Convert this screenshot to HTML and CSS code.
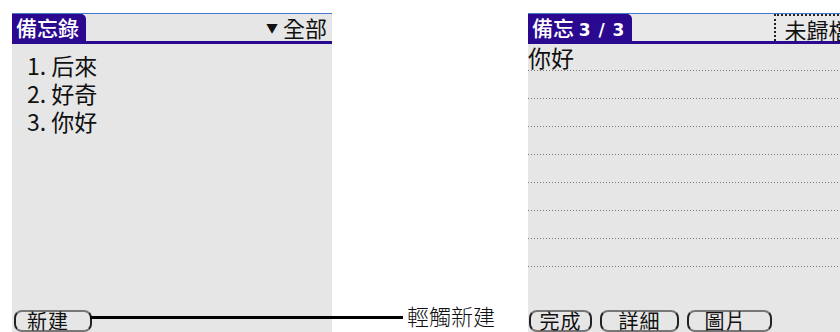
FILE: index.html
```html
<!DOCTYPE html>
<html lang="zh-Hant">
<head>
    <meta charset="UTF-8">
    <meta name="viewport" content="width=device-width, initial-scale=1.0">
    <link rel="stylesheet" href="styles.css">
    <title>備忘錄</title>
</head>
<body>
    <div class="pagina">
        <!-- tela da lista -->
        <section class="tela">
            <div class="topo">
                <span class="aba">備忘錄</span>
                <span class="categoria"><span class="seta">▼</span>全部</span>
            </div>
            <ol class="lista">
                <li>1. 后來</li>
                <li>2. 好奇</li>
                <li>3. 你好</li>
            </ol>
            <div class="botoes">
                <button class="botao botao-novo">新建</button>
            </div>
        </section>

        <!-- tela da nota -->
        <section class="tela tela-nota">
            <div class="topo">
                <span class="aba">備忘 <b class="num">3 / 3</b></span>
                <span class="categoria pontilhada">未歸檔</span>
            </div>
            <div class="linhas">
                <div class="linha">你好</div>
                <div class="linha"></div>
                <div class="linha"></div>
                <div class="linha"></div>
                <div class="linha"></div>
                <div class="linha"></div>
                <div class="linha"></div>
                <div class="linha"></div>
            </div>
            <div class="botoes">
                <button class="botao botao-feito">完成</button>
                <button class="botao botao-detalhe">詳細</button>
                <button class="botao botao-figura">圖片</button>
            </div>
        </section>

        <div class="legenda">
            <span class="traco"></span>
            <span class="texto">輕觸新建</span>
        </div>
    </div>
</body>
</html>
```

FILE: styles.css
```css
* {
    box-sizing: border-box;
}

body {
    margin: 0;
    background: #fff;
    font-family: "Noto Sans CJK TC", "Noto Sans", sans-serif;
    color: #111;
    overflow: hidden;
}

.pagina {
    position: relative;
    display: flex;
    gap: 196px;
    padding: 13px 0 0 12px;
    height: 332px;
    overflow: hidden;
}

.tela {
    flex: 0 0 320px;
    height: 319px;
    background: #e6e6e6;
    border-top: 1px solid #4a78c8;
    display: flex;
    flex-direction: column;
}

.topo {
    display: flex;
    justify-content: space-between;
    align-items: stretch;
    height: 30px;
    border-bottom: 3px solid #2a0890;
}

.aba {
    flex-shrink: 0;
    white-space: nowrap;
    background: #2a0890;
    color: #fff;
    font-size: 21px;
    line-height: 27px;
    font-weight: 500;
    padding: 0 7px 0 4px;
    border-top-right-radius: 5px;
}

.num {
    font-family: "DejaVu Sans", sans-serif;
    font-size: 17px;
    letter-spacing: 1px;
}

.categoria {
    font-size: 22px;
    line-height: 26px;
    padding-right: 5px;
}

.seta {
    font-size: 12px;
    vertical-align: 4px;
    margin-right: 5px;
}

.lista {
    list-style: none;
    margin: 0;
    padding: 7px 0 0 15px;
    flex: 1;
}

.lista li {
    font-size: 23px;
    line-height: 28px;
    height: 28px;
}

.botoes {
    display: flex;
    gap: 8px;
    padding: 0 0 0 2px;
}

.botao {
    font-family: inherit;
    font-size: 20px;
    line-height: 18px;
    height: 22px;
    background: transparent;
    color: #111;
    border: 2px solid #222;
    border-top-color: #777;
    border-bottom-color: #777;
    border-radius: 8px;
    padding: 0;
    letter-spacing: 1px;
}

.botao-novo {
    width: 78px;
    padding-right: 10px;
}

.tela-nota .topo {
    justify-content: flex-start;
    background: #e9e9e9;
}

.pontilhada {
    flex-shrink: 0;
    border: 2px dotted #222;
    border-bottom: none;
    padding: 0 6px 0 8px;
    margin-left: 142px;
    white-space: nowrap;
}

.linhas {
    flex: 1;
}

.linha {
    height: 28px;
    margin-right: 4px;
    font-size: 23px;
    line-height: 26px;
    background-image: linear-gradient(to right, #777 1px, transparent 1px);
    background-size: 3px 1px;
    background-repeat: repeat-x;
    background-position: left bottom;
}

.linha:first-child {
    height: 27px;
}

.tela-nota .botoes {
    padding-left: 1px;
}

.botao-feito {
    width: 63px;
}

.botao-detalhe {
    width: 79px;
}

.botao-figura {
    width: 85px;
    padding-right: 8px;
}

/* legenda sobre a tela */
.legenda {
    position: absolute;
    left: 90px;
    top: 302px;
    display: flex;
    align-items: center;
}

.traco {
    width: 313px;
    height: 3px;
    background: #000;
    margin-top: 4px;
}

.texto {
    font-size: 22px;
    line-height: 26px;
    margin-left: 4px;
    font-weight: 300;
}
```
